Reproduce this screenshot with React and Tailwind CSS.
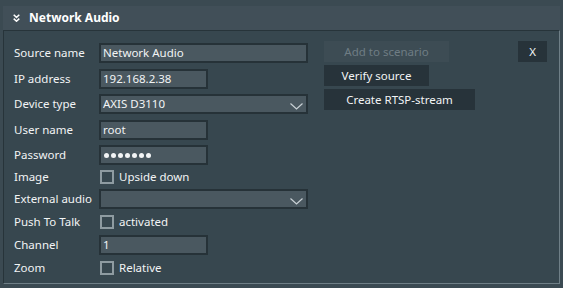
import React from 'react';

const font = { fontFamily: '"Noto Sans", "Liberation Sans", sans-serif' };

function Chevron() {
  return (
    <svg width="13" height="7" viewBox="0 0 13 7" className="absolute right-[3px] top-[7px]">
      <polyline points="0.5,0.5 6.5,6 12.5,0.5" fill="none" stroke="#c9d1d5" strokeWidth="1.2" />
    </svg>
  );
}

function TextInput({ value, wide, select }) {
  return (
    <div
      className={`relative h-[20px] ${wide ? 'w-[209px]' : 'w-[109px]'} border-2 border-[#263238] bg-[#4a5860] pl-[2px] text-[11.5px] leading-[16px] text-[#f2f4f5]`}
    >
      {value}
      {select && <Chevron />}
    </div>
  );
}

function Dots() {
  return (
    <div className="flex h-[16px] items-center gap-[2px] pl-[1px]">
      {[0, 1, 2, 3, 4, 5, 6].map((i) => (
        <div key={i} className="h-[5px] w-[5px] rounded-full bg-[#f2f4f5]" />
      ))}
    </div>
  );
}

function Check({ label }) {
  return (
    <div className="flex h-[20px] items-center">
      <div className="ml-[1px] h-[14px] w-[14px] border-2 border-[#8e9ba1]" />
      <span className="ml-[5px] text-[11.5px] text-[#f2f4f5]">{label}</span>
    </div>
  );
}

function Row({ label, mt, children }) {
  return (
    <div className={`flex items-center ${mt}`}>
      <div className="w-[85px] text-[11.5px] text-[#f2f4f5]">{label}</div>
      {children}
    </div>
  );
}

export default function App() {
  return (
    <div className="h-[288px] w-[563px] bg-[#3b4a52] pt-[6px] pl-[3px]" style={font}>
      <div className="w-[557px]">
        {/* header */}
        <div className="flex h-[24px] items-center bg-[#414f58]">
          <svg width="7" height="8" viewBox="0 0 7 8" className="ml-[10px]">
            <polyline points="0.7,0.8 3.5,3.4 6.3,0.8" fill="none" stroke="#ffffff" strokeWidth="1.5" />
            <polyline points="0.7,4.6 3.5,7.2 6.3,4.6" fill="none" stroke="#ffffff" strokeWidth="1.5" />
          </svg>
          <span className="ml-[9px] text-[12px] font-bold text-white">Network Audio</span>
        </div>

        {/* body */}
        <div className="flex h-[254px] border-t border-l border-r border-b border-t-[#27343a] border-l-[#27343a] border-r-[#6f7f87] border-b-[#6f7f87] bg-[#37474f]">
          <div className="flex flex-col pl-[10px] pt-[12px]">
            <Row label="Source name" mt="">
              <TextInput value="Network Audio" wide />
            </Row>
            <Row label="IP address" mt="mt-[6px]">
              <TextInput value="192.168.2.38" />
            </Row>
            <Row label="Device type" mt="mt-[5px]">
              <TextInput value="AXIS D3110" wide select />
            </Row>
            <Row label="User name" mt="mt-[6px]">
              <TextInput value="root" />
            </Row>
            <Row label="Password" mt="mt-[5px]">
              <TextInput value={<Dots />} />
            </Row>
            <Row label="Image" mt="mt-[2px]">
              <Check label="Upside down" />
            </Row>
            <Row label="External audio" mt="mt-[2px]">
              <TextInput value="" wide select />
            </Row>
            <Row label="Push To Talk" mt="mt-[3px]">
              <Check label="activated" />
            </Row>
            <Row label="Channel" mt="mt-[3px]">
              <TextInput value="1" />
            </Row>
            <Row label="Zoom" mt="mt-[3px]">
              <Check label="Relative" />
            </Row>
          </div>

          <div className="ml-[16px] flex flex-col gap-[3px] pt-[10px] text-[11.5px]">
            <div className="flex h-[21px] w-[125px] items-center justify-center bg-[#3d4c54] text-[#6f7d84]">
              Add to scenario
            </div>
            <div className="flex h-[21px] w-[105px] items-center justify-center bg-[#27333a] text-[#f2f4f5]">
              Verify source
            </div>
            <div className="flex h-[21px] w-[151px] items-center justify-center bg-[#27333a] text-[#f2f4f5]">
              Create RTSP-stream
            </div>
          </div>

          <div className="ml-auto mr-[12px] pt-[10px]">
            <div className="flex h-[21px] w-[29px] items-center justify-center bg-[#27333a] text-[11.5px] text-[#f2f4f5]">
              X
            </div>
          </div>
        </div>
      </div>
    </div>
  );
}
